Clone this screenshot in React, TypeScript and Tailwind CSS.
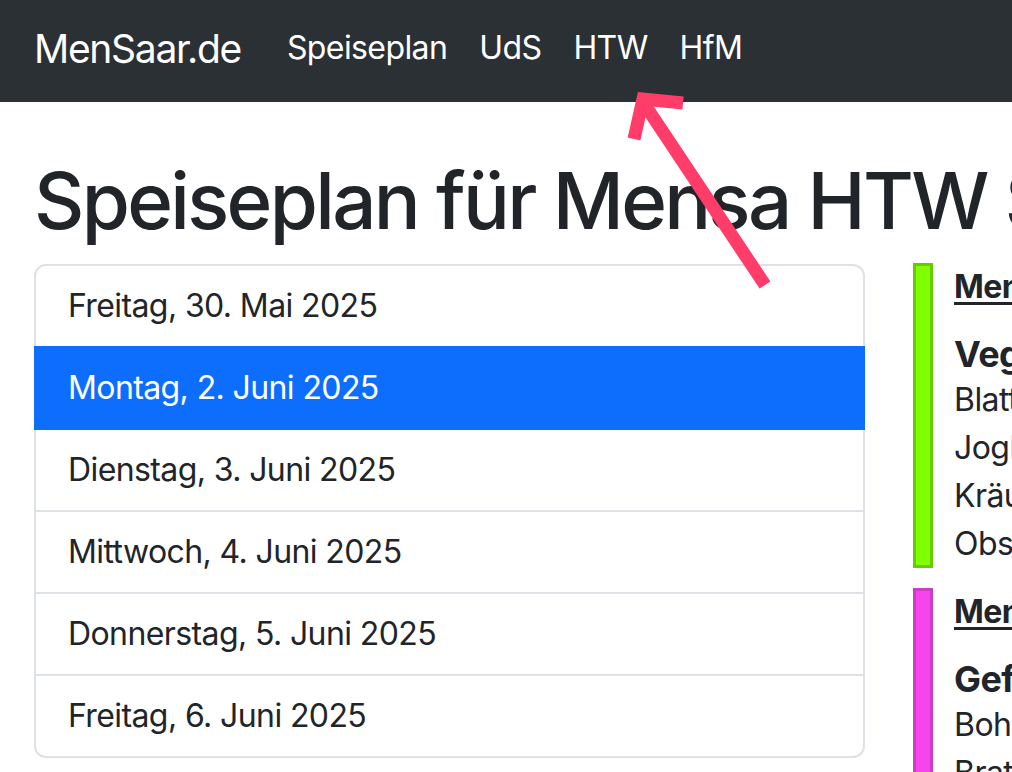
import React from "react";

const days = [
  { label: "Freitag, 30. Mai 2025", active: false },
  { label: "Montag, 2. Juni 2025", active: true },
  { label: "Dienstag, 3. Juni 2025", active: false },
  { label: "Mittwoch, 4. Juni 2025", active: false },
  { label: "Donnerstag, 5. Juni 2025", active: false },
  { label: "Freitag, 6. Juni 2025", active: false },
];

const menus = [
  {
    title: "Menü 1",
    name: "Vegetarisch",
    items: ["Blattsalat", "Joghurt-Dressing", "Kräuterquark", "Obst"],
    bar: "bg-[#80ff00] border-[#66cc00]",
  },
  {
    title: "Menü 2",
    name: "Geflügel",
    items: ["Bohnen", "Bratkartoffeln"],
    bar: "bg-[#f745ee] border-[#cc3cc4]",
  },
];

const Arrow = () => (
  <svg
    className="absolute left-0 top-0 pointer-events-none"
    width="1012"
    height="772"
    viewBox="0 0 1012 772"
  >
    <g stroke="#ff3d68" strokeWidth="13" fill="none">
      <line x1="765" y1="285" x2="643" y2="102" />
      <polyline points="634,139 643,99 683,103" strokeLinejoin="miter" strokeMiterlimit="10" />
    </g>
  </svg>
);

export default function App() {
  return (
    <div
      className="relative w-[1012px] h-[772px] overflow-hidden bg-white text-[#212529]"
      style={{ fontFamily: "Inter, 'Liberation Sans', sans-serif" }}
    >
      {/* Navbar */}
      <nav className="h-[102px] bg-[#2b3035] flex items-center pl-[34px] pb-[6px] text-white">
        <span className="text-[39px] leading-none tracking-[-1.3px] mr-[30px]">MenSaar.de</span>
        <div className="flex items-center text-[32px] leading-none tracking-[-0.6px]">
          <span className="px-[16px]">Speiseplan</span>
          <span className="px-[16px]">UdS</span>
          <span className="px-[16px]">HTW</span>
          <span className="px-[16px]">HfM</span>
        </div>
      </nav>

      <main className="pl-[34px] pt-[52px]">
        <h1 className="text-[78px] font-medium leading-[1.2] whitespace-nowrap tracking-[-2.7px]">
          Speiseplan für Mensa HTW Saar
        </h1>

        <div className="flex mt-[16px] items-start">
          {/* Day list */}
          <div className="w-[831px] shrink-0 flex flex-col text-[32px] leading-[48px] tracking-[-0.6px]">
            {days.map((d, i) => (
              <div
                key={d.label}
                className={[
                  "px-[32px] py-[16px] border-x-2 border-b-2",
                  i === 0 ? "border-t-2 rounded-t-[12px]" : "",
                  i === days.length - 1 ? "rounded-b-[12px]" : "",
                  d.active
                    ? "bg-[#0d6efd] text-white border-[#0d6efd] border-t-2 -mt-[2px]"
                    : "bg-white border-[#dee2e6]",
                ].join(" ")}
              >
                {d.label}
              </div>
            ))}
          </div>

          {/* Menus */}
          <div className="ml-[48px] flex flex-col gap-[20px] whitespace-nowrap -mt-[1px] tracking-[-0.55px]">
            {menus.map((m) => (
              <div key={m.title} className="flex">
                <div className={`w-[20px] shrink-0 border-[3px] ${m.bar}`} />
                <div className="ml-[21px] text-[32px] leading-[48px]">
                  <div className="font-bold underline underline-offset-[4px] decoration-[3px]">
                    {m.title}
                  </div>
                  <div className="text-[36px] font-bold leading-[1.2] mt-[22px]">{m.name}</div>
                  {m.items.map((it) => (
                    <div key={it}>{it}</div>
                  ))}
                </div>
              </div>
            ))}
          </div>
        </div>
      </main>

      <Arrow />
    </div>
  );
}
